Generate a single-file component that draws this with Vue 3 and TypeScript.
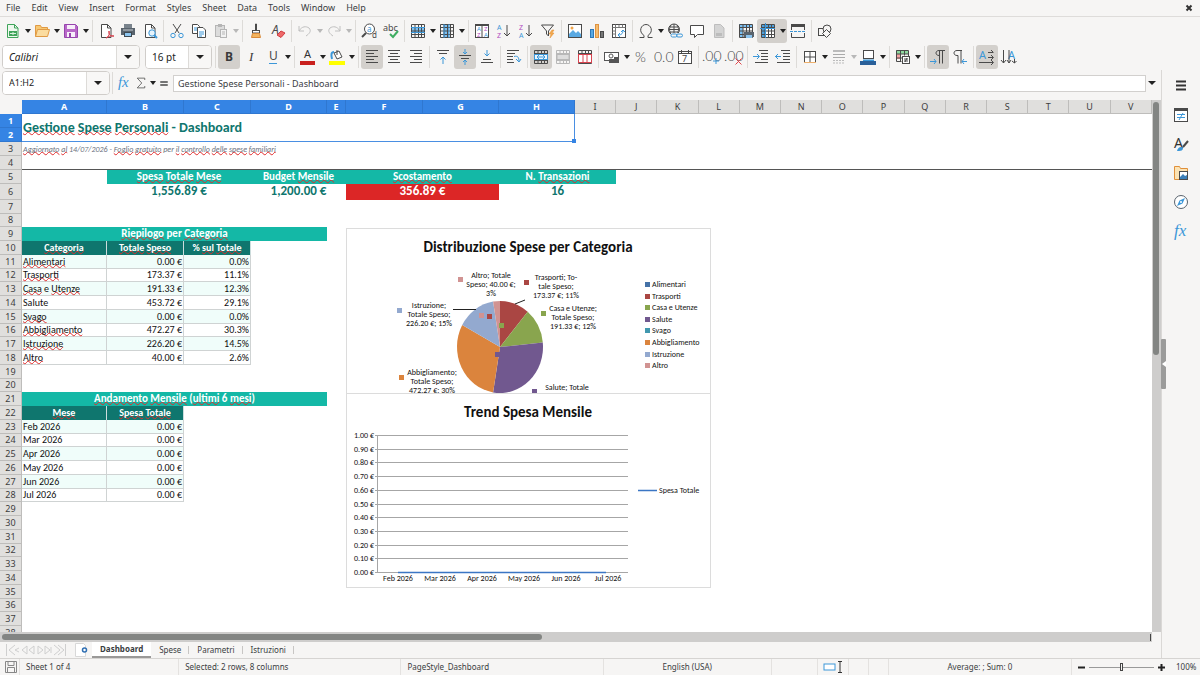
<script setup lang="ts">
import { ref } from 'vue'

interface Tool {
  icon?: string
  label?: string
  menu?: boolean
  active?: boolean
  disabled?: boolean
  sep?: boolean
}
interface Cell {
  text: string
  span?: number
  rows?: number
  cls?: string
}

const K = '#4a4a4a'
const B = '#3c97d8'
const box = (x: number, y: number, w: number, h: number, fill = 'none', stroke = K) =>
  `<rect x="${x}" y="${y}" width="${w}" height="${h}" fill="${fill}" stroke="${stroke}"/>`
const line = (d: string, stroke = K, w = 1) =>
  `<path d="${d}" fill="none" stroke="${stroke}" stroke-width="${w}"/>`
const solid = (d: string, fill: string) => `<path d="${d}" fill="${fill}"/>`
const glyph = (t: string, x: number, y: number, size: number, fill = K, extra = '') =>
  `<text x="${x}" y="${y}" font-size="${size}" fill="${fill}" ${extra}>${t}</text>`
const LIGHT = 'font-family="Lato, sans-serif" font-weight="300"'
const gridLines = (c = K) => line('M1.5 1.5h13v13h-13zM1.5 4.5h13M1.5 8h13M1.5 11.5h13M5 1.5v13M8.5 1.5v13M11.5 1.5v13', c)

const icons: Record<string, string> = {
  new: '<path d="M2.5 1.5h7l3.500 3.500v9.500h-10.500z" fill="#eef8ee" stroke="#3fa45a"/>' + line('M9.500 1.500v3.500h3.500', '#3fa45a') + solid('M4 8h8v5H4z', '#3fa45a') + line('M5 10.500h6M8 9v3', '#d7f0dc'),
  open: '<path d="M1.500 13.500v-11h5l1 2h6v3" fill="#f7c873" stroke="#e09a44"/><path d="M1.500 13.500l2-7h12l-2 7z" fill="#fbdc9f" stroke="#e09a44"/>',
  save: '<path d="M1.500 1.500h11l2 2v11h-13z" fill="#b868c8" stroke="#9744ad"/>' + solid('M4 2h8v4H4zM4 9h8v5H4z', '#f7eefa') + solid('M6 10h2v4H6z', '#9744ad'),
  pdf: '<path d="M3.500 1.500h6l3.500 3.500v9.500h-9.500z" fill="#fff" stroke="#4a4a4a"/>' + line('M9.500 1.500v3.500h3.500') + line('M8 15c3-1 4-5 3-7c-1 3 2 6 5 5c-3-1-6 1-8 2z', '#d8424e'),
  print: solid('M1 5h14v7H1z', '#59636d') + solid('M4 1h8v4H4z', '#79838c') + box(4.5, 9.5, 7, 4, '#8cc4ee', '#3d4850') + line('M3 7h10', '#c6ccd0'),
  preview: '<path d="M3.500 1.500h6l3.500 3.500v9.500h-9.500z" fill="#fff" stroke="#4a4a4a"/>' + line('M9.500 1.500v3.500h3.500') + '<circle cx="10" cy="10" r="3.200" fill="#e6f3fc" stroke="#3c97d8"/>' + line('M12 12l3 3', B, 2),
  cut: line('M4 1l6 9M12 1l-6 9', K, 1) + '<circle cx="4" cy="12.500" r="2.200" fill="none" stroke="#3c97d8"/><circle cx="12" cy="12.500" r="2.200" fill="none" stroke="#3c97d8"/>',
  copy: '<path d="M1.500 1.500h5l2 2v7h-7z" fill="#fff" stroke="#4a4a4a"/><path d="M6.500 4.500h5.500l2.500 2.500v7.500h-8z" fill="#fff" stroke="#4a4a4a"/>' + line('M3 5h3M3 7h3M8 9h5M8 11h5M8 13h3', B),
  paste: box(2.5, 2.5, 9, 11, '#dcdcdc', '#b5b5b5') + solid('M5 1h4v3H5z', '#b5b5b5') + box(7.5, 6.5, 6, 8, '#f2f2f2', '#b5b5b5') + line('M9 9h3M9 11h3', '#b5b5b5'),
  clone: line('M7.500 1v6h1V1z') + box(4.5, 7.5, 7, 2.5, '#fff') + '<path d="M4.500 10.500l-1 4h9l-1-4z" fill="#f3b45f" stroke="#d8893a"/>',
  clear: glyph('A', 2, 11, 12, K, 'font-style="italic"') + '<path d="M7 12l4-4 4 2-4 4.500z" fill="#ee6a6a" stroke="#d13b40"/>',
  undo: line('M2 3v5h5M2 8c3-5 7-5 10-3c3 3 0 6-3 8', '#c0c0c0'),
  redo: line('M14 3v5h-5M14 8c-3-5-7-5-10-3c-3 3 0 6 3 8', '#c0c0c0'),
  find: '<circle cx="8.500" cy="6" r="5" fill="#fff" stroke="#4a4a4a"/>' + line('M5 10l-4 4', K, 2) + glyph('a', 6, 9, 8, B) + glyph('d', 11, 15, 8),
  spell: glyph('abc', 0, 8, 9) + line('M7 11l3 3 5-6', '#3fae62', 2),
  row: solid('M1 5h14v5H1z', '#7cc0f2') + gridLines() + line('M1 4.500h14M1 9.500h14', B),
  col: solid('M5 1h5v14H5z', '#7cc0f2') + gridLines() + line('M5 1v14M10 1v14', B),
  sort: box(1.5, 1.5, 13, 13, '#fff') + solid('M1 1h14v2H1z', K) + line('M8 3v12') + glyph('A', 3, 8, 6, B) + glyph('Z', 3, 14, 6, '#b04bc0') + glyph('Z', 10, 8, 6, '#b04bc0') + glyph('A', 10, 14, 6, B),
  asc: glyph('A', 1, 7, 7, B) + glyph('Z', 1, 15, 7, '#b04bc0') + line('M11 2v11M8 10l3 3 3-3'),
  desc: glyph('Z', 1, 7, 7, '#b04bc0') + glyph('A', 1, 15, 7, B) + line('M11 2v11M8 10l3 3 3-3'),
  filter: line('M1.500 2h12l-5 6v5l-2-2v-3z') + '<path d="M12 7l-3 4h2l-1 4 4-5h-2l2-3z" fill="#f3a94e" stroke="#e28e33" stroke-width=".5"/>',
  image: box(1.5, 1.5, 13, 13, '#fff') + solid('M2 14v-3l4-4 3 3 2-2 3 3v3z', '#5aa9e2') + '<circle cx="5" cy="5" r="1.500" fill="#f0a44a"/>',
  chart: box(1.5, 6.5, 3, 8, '#5aa9e2', '#2f79b8') + box(6.5, 1.5, 3, 13, '#f6bd70', '#df9341') + box(11.5, 8.5, 3, 6, '#777', K),
  pivot: box(1.5, 1.5, 13, 13, '#fff') + line('M1.500 4.500h13M4.500 1.500v13M8 1.500v3M11.500 1.500v3M1.500 8h3M1.500 11h3', '#777') + line('M7 12c4 0 5-2 5-5M10 9l2-2 2 2M9 10l-2 2 2 2', B),
  omega: line('M1.500 14.500h4.500v-2c-6-4-3-11 2-11s8 7 2 11v2h4.500'),
  link: '<circle cx="7" cy="6.500" r="5.500" fill="none" stroke="#4a4a4a"/>' + line('M1.500 6.500h11M7 1v11M4 2c-2 3-2 6 0 9M10 2c2 3 2 6 0 9M3 4h8M3 9h8') + '<path d="M4 10h12v5H4z" fill="#f6f5f4"/><rect x="4" y="11" width="6" height="3" rx="1.500" fill="none" stroke="#3c97d8"/><rect x="9.500" y="11" width="6" height="3" rx="1.500" fill="none" stroke="#3c97d8"/>',
  comment: '<path d="M1.500 2.500h13v9h-6l-3 3v-3h-4z" fill="#fff" stroke="#4a4a4a"/>',
  header: '<path d="M3.500 1.500h6l3.500 3.500v9.500h-9.500z" fill="#d4d4d4" stroke="#bdbdbd"/>' + solid('M5 10h6v3H5z', '#bcbcbc'),
  printarea: solid('M1 1h13v3H1zM1 1h4v13H1z', '#7cc0f2') + gridLines() + solid('M6 9h10v5H6z', '#59636d') + solid('M8 12h6v3H8z', '#8cc4ee'),
  freeze: solid('M6 6h9v9H6z', '#fff') + solid('M2 2h12v3H2zM2 2h4v12H2z', '#4da0dd') + gridLines() + line('M5.500 0v15M0 5.500h15', B),
  split: line('M1.500 7V2h13v5M1.500 10v4.500h13V10') + solid('M1 1h14v3H1z', K) + '<path d="M0 8.500h16" stroke="#3c97d8" stroke-dasharray="3 1"/>',
  shapes: box(1.5, 5.5, 7, 7, '#f6f5f4') + '<circle cx="10" cy="6" r="4" fill="#f6f5f4" stroke="#4a4a4a"/><path d="M9.500 6.500l4 4-4 4-4-4z" fill="#f6f5f4" stroke="#4a4a4a"/>',
  bold: glyph('B', 4, 12, 12, '#3a3a3a', 'font-weight="700"'),
  italic: glyph('I', 6, 12, 13, '#3a3a3a', 'font-style="italic" font-family="Liberation Serif, serif"'),
  underline: glyph('U', 4, 11, 12) + line('M4 14.500h8', B),
  fontcolor: glyph('A', 4, 9, 11, '#333') + solid('M0 12h15v4H0z', '#c9211e'),
  fill: '<path d="M5 4l5-2 3 6-5 2z" fill="#fff" stroke="#4a4a4a"/>' + line('M8 6V1') + line('M5 3c-3 0-3 3-2 7', B, 2) + solid('M0 12h16v4H0z', '#ffff00'),
  left: line('M2 1.500h12M2 4.500h8M2 7.500h12M2 10.500h8M2 13.500h12'),
  center: line('M2 1.500h12M4 4.500h8M2 7.500h12M4 10.500h8M2 13.500h12'),
  right: line('M2 1.500h12M6 4.500h8M2 7.500h12M6 10.500h8M2 13.500h12'),
  top: line('M2 1.500h12M4 4.500h8') + line('M8 15V8M5.500 10.500L8 8l2.500 2.500', B),
  middle: line('M2 6.500h12M4 9.500h8') + line('M8 0v5M6 3l2 2 2-2M8 16v-5M6 13l2-2 2 2', B),
  bottom: line('M4 10.500h8M2 13.500h12') + line('M8 1v6M5.500 4.500L8 7l2.500-2.500', B),
  wrap: line('M1 1.500h12M1 4.500h8M1 7.500h6M1 10.500h6M1 13.500h7') + line('M8 7.500c4-1 5 1 5 5M10 10l3 3 2-3', B),
  merge: gridLines() + box(1.5, 5.5, 13, 5, '#eaf5fd', B) + line('M4 8h8M6 6L4 8l2 2M10 6l2 2-2 2', B),
  mergeoff: gridLines('#b8b8b8') + box(2, 5.5, 12, 5, '#ddd', '#b8b8b8'),
  unmerge: gridLines() + box(1.5, 5.5, 13, 8, '#fff', '#d8424e') + line('M6 5v9M10 5v9', '#d8424e'),
  money: box(0.5, 3.5, 14, 8, '#fff', '#555') + '<circle cx="7" cy="7" r="2" fill="none" stroke="#555"/>' + solid('M5 10h5v4H5zM10 8h5v6h-5z', '#555'),
  percent: glyph('%', 2, 13, 14, K, LIGHT),
  number: glyph('0.0', -1, 13, 14, K, LIGHT),
  date: box(1.5, 2.5, 13, 12, '#fff') + line('M1.500 4.500h13M4.500 1v3M11.500 1v3') + glyph('7', 5, 13, 9),
  adddec: glyph('.00', -2, 12, 14, K, LIGHT) + line('M12 9v6M9 12h6', B),
  deldec: glyph('.00', -2, 12, 14, K, LIGHT) + line('M9.500 9.500l6 6M15.500 9.500l-6 6', '#e2464c'),
  indent: line('M6 1.500h9M8 4.500h7M8 7.500h7M8 10.500h7M2 13.500h13') + line('M0 7.500h6M4 5l2.500 2.500L4 10', B),
  outdent: line('M6 1.500h9M8 4.500h7M8 7.500h7M8 10.500h7M2 13.500h13') + line('M0 7.500h6M3 5L.5 7.500 3 10', B),
  borders: box(2.5, 2.5, 11, 11, '#fff') + line('M8 2v12M2 8h12') + line('M2 13.500h12', '#eeb06c'),
  linestyle: solid('M2 1h12v2H2z', '#bbb') + line('M2 5.500h12M2 8.500h12', '#aaa') + '<path d="M2 11.500h12M2 14h12" stroke="#bbb" stroke-dasharray="2 1"/>',
  linecolor: box(3.5, 1.5, 10, 8, '#fff') + line('M3 11.500h11', B, 2) + solid('M0 12h16v4H0z', '#2a6099'),
  cond: solid('M1 1h12v4H1z', '#8fd9a0') + solid('M1 5h4v5H1z', '#f5a3a3') + line('M1.500 1.500h12v6M1.500 1.500v11h5M1.500 5h12M1.500 9h6M5.500 1.500v11M9.500 1.500v5') + box(7.5, 7.5, 7, 7, '#fff') + line('M9 10h4M9 12h4M12 9l-2 4'),
  ltr: line('M15 1.500H9c-4 0-4 5 0 5M9.500 1.500v13M12.500 1.500v13') + line('M0 12.500h6M4 10l2 2.500L4 15', B),
  rtl: line('M10 1.500H5c-4 0-4 5 0 5h1v8M9 1.500v13') + line('M15 12.500h-5M12 10l-2 2.500 2 2.500', B),
  texth: glyph('A', 0, 10, 11, B) + line('M9 3.500h5M12 1l2.500 2.500M9 8.500h5M12 6l2.500 2.500L12 11M0 13.500h14M12 11l2.500 2.500L12 16'),
  textv: glyph('A', 7, 10, 11, B) + line('M2.500 1v13M0 11l2.500 3L5 11M8 1v13M6 11l2 3 2-3M13.500 10v4M11 12l2.500 2 2-2'),
  menu: line('M3 3.500h10M3 7.500h10M3 11.500h10', '#333', 2),
  props: box(1.5, 1.5, 13, 13, '#fff') + solid('M1 1h14v3H1z', K) + line('M4 7.500h8M4 10.500h8M10 6L6 13', B),
  styles: glyph('A', 1, 12, 14, '#333') + line('M15 5l-5 6', K, 2) + solid('M4 15c1-4 4-5 6-3c0 3-3 3-6 3z', B),
  gallery: '<path d="M1.500 14.500v-13h5l1 2h7v11z" fill="#fbe3b5" stroke="#e0903a"/>' + box(6.5, 6.5, 8, 8, '#fff') + solid('M7 14v-2l3-3 2 2 2-1v4z', '#3c7fb8') ,
  nav: '<circle cx="8" cy="8" r="6.500" fill="#fff" stroke="#59636d"/><path d="M12 4l-2.500 5.500L4 12l2.500-5.500z" fill="#3c97d8"/><circle cx="8" cy="8" r="1" fill="#fff"/>',
  fx: glyph('fx', 1, 13, 17, B, 'font-style="italic" font-family="Liberation Serif, serif"'),
  sigma: line('M13 4V1.500H3l6 6.500-6 6.500h10V12'),
  equals: line('M3 6.500h10M3 10.500h10', K, 2),
}

const s: Tool = { sep: true }
const t = (icon: string, label: string, o: Partial<Tool> = {}): Tool => ({ icon, label, ...o })
const m = { menu: true }

const standard: Tool[] = [
  t('new', 'New', m), t('open', 'Open', m), t('save', 'Save', m), s,
  t('pdf', 'Export as PDF'), t('print', 'Print'), t('preview', 'Print Preview'), s,
  t('cut', 'Cut'), t('copy', 'Copy'), t('paste', 'Paste', { menu: true, disabled: true }), s,
  t('clone', 'Clone Formatting'), t('clear', 'Clear Formatting'), s,
  t('undo', 'Undo', { menu: true, disabled: true }), t('redo', 'Redo', { menu: true, disabled: true }), s,
  t('find', 'Find & Replace'), t('spell', 'Spelling'), s,
  t('row', 'Row', m), t('col', 'Column', m), s,
  t('sort', 'Sort'), t('asc', 'Sort Ascending'), t('desc', 'Sort Descending'), t('filter', 'AutoFilter'), s,
  t('image', 'Insert Image'), t('chart', 'Insert Chart'), t('pivot', 'Pivot Table'), s,
  t('omega', 'Special Character', m), t('link', 'Hyperlink'), t('comment', 'Comment'), t('header', 'Headers and Footers', { disabled: true }), s,
  t('printarea', 'Print Area'), t('freeze', 'Freeze Rows and Columns', { menu: true, active: true }), t('split', 'Split Window'), s,
  t('shapes', 'Draw Functions'),
]
const formatting: Tool[] = [
  s, t('bold', 'Bold', { active: true }), t('italic', 'Italic'), t('underline', 'Underline', m), s,
  t('fontcolor', 'Font Color', m), t('fill', 'Background Color', m), s,
  t('left', 'Align Left', { active: true }), t('center', 'Center'), t('right', 'Align Right'), s,
  t('top', 'Align Top'), t('middle', 'Center Vertically', { active: true }), t('bottom', 'Align Bottom'), s,
  t('wrap', 'Wrap Text'), s,
  t('merge', 'Merge and Center', { active: true }), t('mergeoff', 'Merge Cells', { disabled: true }), t('unmerge', 'Unmerge Cells'), s,
  t('money', 'Currency', m), t('percent', 'Percent'), t('number', 'Number'), t('date', 'Date'), s,
  t('adddec', 'Add Decimal Place'), t('deldec', 'Delete Decimal Place'), s,
  t('indent', 'Increase Indent'), t('outdent', 'Decrease Indent'), s,
  t('borders', 'Borders', m), t('linestyle', 'Border Style', { menu: true, disabled: true }), t('linecolor', 'Border Color', m), s,
  t('cond', 'Conditional', m), s,
  t('ltr', 'Left-To-Right', { active: true }), t('rtl', 'Right-To-Left'), s,
  t('texth', 'Text Direction Horizontal', { active: true }), t('textv', 'Text Direction Vertical'),
]
const sidebar = [['menu', 'Sidebar Settings'], ['props', 'Properties'], ['styles', 'Styles'], ['gallery', 'Gallery'], ['nav', 'Navigator'], ['fx', 'Functions']]
const menus = ['File', 'Edit', 'View', 'Insert', 'Format', 'Styles', 'Sheet', 'Data', 'Tools', 'Window', 'Help']
const tabs = ['Dashboard', 'Spese', 'Parametri', 'Istruzioni']

const columns = 'ABCDEFGHIJKLMNOPQRSTUV'.split('')

// Words between tildes carry the spelling mark.
const parts = (text: string) => text.split('~').map((v, i) => ({ v, bad: i % 2 === 1 }))

const categories: [string, string, string][] = [
  ['~Alimentari~', '0.00 €', '0.0%'],
  ['~Trasporti~', '173.37 €', '11.1%'],
  ['~Casa~ e ~Utenze~', '191.33 €', '12.3%'],
  ['Salute', '453.72 €', '29.1%'],
  ['~Svago~', '0.00 €', '0.0%'],
  ['~Abbigliamento~', '472.27 €', '30.3%'],
  ['~Istruzione~', '226.20 €', '14.5%'],
  ['~Altro~', '40.00 €', '2.6%'],
]
const months = ['Feb 2026', 'Mar 2026', 'Apr 2026', 'May 2026', 'Jun 2026', 'Jul 2026']

const cells: Record<number, Cell[]> = {
  1: [{ text: '~Gestione~ ~Spese~ ~Personali~ - Dashboard', span: 8, rows: 2, cls: 'title' }],
  3: [{ text: '~Aggiornato~ ~al~ 14/07/2026 - ~Foglio~ ~gratuito~ per ~il~ ~controllo~ ~delle~ ~spese~ ~familiari~', span: 8, cls: 'note' }],
  5: [
    { text: '' },
    { text: '~Spesa~ ~Totale~ ~Mese~', span: 2, cls: 'band' },
    { text: 'Budget ~Mensile~', span: 2, cls: 'band' },
    { text: '~Scostamento~', span: 2, cls: 'band' },
    { text: 'N. ~Transazioni~', span: 2, cls: 'band' },
  ],
  6: [
    { text: '' },
    { text: '1,556.89 €', span: 2, cls: 'kpi' },
    { text: '1,200.00 €', span: 2, cls: 'kpi' },
    { text: '356.89 €', span: 2, cls: 'kpi alert' },
    { text: '16', span: 2, cls: 'kpi' },
  ],
  9: [{ text: '~Riepilogo~ per ~Categoria~', span: 4, cls: 'band' }],
  10: [{ text: '~Categoria~', cls: 'head' }, { text: '~Totale~ ~Speso~', cls: 'head' }, { text: '% ~sul~ ~Totale~', cls: 'head' }],
  21: [{ text: '~Andamento~ ~Mensile~ (~ultimi~ 6 ~mesi~)', span: 4, cls: 'band' }],
  22: [{ text: '~Mese~', cls: 'head' }, { text: '~Spesa~ ~Totale~', cls: 'head' }],
}
categories.forEach((c, i) => {
  const tint = i % 2 ? '' : ' tint'
  cells[11 + i] = c.map((text, j) => ({ text, cls: (j ? 'data num' : 'data') + tint }))
})
months.forEach((mo, i) => {
  const tint = i % 2 ? '' : ' tint'
  cells[23 + i] = [{ text: mo, cls: 'data' + tint }, { text: '0.00 €', cls: 'data num' + tint }]
})
const rows = Array.from({ length: 38 }, (_, i) => {
  const n = i + 1
  const list = cells[n] ?? []
  const used = n === 2 ? 8 : list.reduce((a, c) => a + (c.span ?? 1), 0)
  return { n, list, rest: columns.length - used }
})

const palette = ['#4572a7', '#aa4643', '#89a54e', '#71588f', '#4198af', '#db843d', '#93a9cf', '#d19392']
const legend = categories.map((c, i) => ({ name: c[0].replace(/~/g, ''), color: palette[i], y: Math.round(56 + i * 11.6) }))
const CX = 154, CY = 119, RX = 43, RY = 46
const values = categories.map(c => parseFloat(c[1]))
const total = values.reduce((a, b) => a + b, 0)
let acc = 0
const slices = values.map((v, i) => {
  const a0 = (acc / total) * 2 * Math.PI
  acc += v
  const a1 = (acc / total) * 2 * Math.PI
  const p = (a: number) => `${(CX + RX * Math.sin(a)).toFixed(2)} ${(CY - RY * Math.cos(a)).toFixed(2)}`
  return { d: `M${CX} ${CY}L${p(a0)}A${RX} ${RY} 0 0 1 ${p(a1)}Z`, color: palette[i], v }
}).filter(x => x.v > 0)
const labels = [
  { x: 145, y: 50, mx: 112, my: 49, c: 7, lines: ['Altro; Totale', 'Speso; 40.00 €;', '3%'] },
  { x: 210, y: 52, mx: 178, my: 52, c: 1, lines: ['Trasporti; To-', 'tale Speso;', '173.37 €; 11%'] },
  { x: 227, y: 83, mx: 195, my: 83, c: 2, lines: ['Casa e Utenze;', 'Totale Speso;', '191.33 €; 12%'] },
  { x: 83, y: 80, mx: 51, my: 80, c: 6, lines: ['Istruzione;', 'Totale Speso;', '226.20 €; 15%'] },
  { x: 86, y: 147, mx: 53, my: 147, c: 5, lines: ['Abbigliamento;', 'Totale Speso;', '472.27 €; 30%'] },
  { x: 221, y: 162, mx: 186, my: 161, c: 3, lines: ['Salute; Totale', 'Speso; 453.72 €;'] },
]
const dots = [[133, 85, 7], [141, 86, 1], [153, 95, 2], [149, 124, 3]]
const ticks = Array.from({ length: 11 }, (_, i) => ({ label: (1 - i / 10).toFixed(2) + ' €', y: Math.round(42 + i * 13.7) }))

const fontName = ref('Calibri')
const fontSize = ref('16 pt')
const cellRef = ref('A1:H2')
const formula = ref('Gestione Spese Personali - Dashboard')
const zoom = ref(50)
const activeTab = ref('Dashboard')
</script>

<template>
  <div class="app">
    <nav class="menubar" aria-label="Menu">
      <button v-for="x in menus" :key="x" type="button">{{ x }}</button>
      <button type="button" class="close" aria-label="Close document">
        <svg width="8" height="8" viewBox="0 0 8 8"><path d="M1.500 1.500l5 5M6.500 1.500l-5 5" stroke="#333" stroke-width="2" /></svg>
      </button>
    </nav>

    <div class="toolbar first" role="toolbar" aria-label="Standard">
      <template v-for="(x, i) in standard" :key="i">
        <span v-if="x.sep" class="sep"></span>
        <span v-else class="tool" :class="{ on: x.active, split: x.menu, off: x.disabled }">
          <button type="button" class="btn" :aria-label="x.label" :disabled="x.disabled">
            <svg width="16" height="16" viewBox="0 0 16 16" v-html="icons[x.icon!]"></svg>
          </button>
          <button v-if="x.menu" type="button" class="caret" :aria-label="x.label + ' options'"></button>
        </span>
      </template>
    </div>

    <div class="toolbar second" role="toolbar" aria-label="Formatting">
      <span class="combo font">
        <input v-model="fontName" aria-label="Font name" />
        <button type="button" aria-label="Show fonts"></button>
      </span>
      <span class="combo size">
        <input v-model="fontSize" aria-label="Font size" />
        <button type="button" aria-label="Show sizes"></button>
      </span>
      <template v-for="(x, i) in formatting" :key="i">
        <span v-if="x.sep" class="sep"></span>
        <span v-else class="tool" :class="{ on: x.active, split: x.menu, off: x.disabled }">
          <button type="button" class="btn" :aria-label="x.label" :disabled="x.disabled">
            <svg width="16" height="16" viewBox="0 0 16 16" v-html="icons[x.icon!]"></svg>
          </button>
          <button v-if="x.menu" type="button" class="caret" :aria-label="x.label + ' options'"></button>
        </span>
      </template>
    </div>

    <div class="work">
      <div class="main">
        <div class="formulabar">
          <span class="combo name">
            <input v-model="cellRef" aria-label="Name box" />
            <button type="button" aria-label="Show names"></button>
          </span>
          <span class="sep"></span>
          <button type="button" class="small" aria-label="Function Wizard"><svg width="14" height="16" viewBox="0 0 16 16" v-html="icons.fx"></svg></button>
          <button type="button" class="small" aria-label="Select Function"><svg width="12" height="12" viewBox="0 0 16 16" v-html="icons.sigma"></svg></button>
          <button type="button" class="caret" aria-label="Function options"></button>
          <button type="button" class="small" aria-label="Formula"><svg width="12" height="14" viewBox="0 0 16 16" v-html="icons.equals"></svg></button>
          <input v-model="formula" class="formula" aria-label="Formula input line" />
          <button type="button" class="caret wide" aria-label="Expand formula bar"></button>
        </div>

        <div class="sheetrow">
          <div class="sheet">
            <table>
              <colgroup>
                <col class="c-row" />
                <col v-for="c in columns" :key="c" :class="'c-' + c" />
              </colgroup>
              <thead>
                <tr>
                  <td class="corner"></td>
                  <th v-for="(c, i) in columns" :key="c" scope="col" :class="{ sel: i < 8 }">{{ c }}</th>
                </tr>
              </thead>
              <tbody>
                <tr v-for="r in rows" :key="r.n" :class="{ short: r.n % 4 === 0 && r.n > 4, tall: r.n === 6, frozen: r.n === 4 }">
                  <th scope="row" :class="{ sel: r.n < 3 }">{{ r.n }}</th>
                  <td v-for="(c, i) in r.list" :key="i" :colspan="c.span ?? 1" :rowspan="c.rows ?? 1" :class="c.cls">
                    <template v-for="(p, j) in parts(c.text)" :key="j"><span v-if="p.bad" class="bad">{{ p.v }}</span><template v-else>{{ p.v }}</template></template>
                    <i v-if="c.cls === 'title'" class="handle"></i>
                  </td>
                  <td v-if="r.rest" :colspan="r.rest"></td>
                </tr>
              </tbody>
            </table>

            <svg class="chart pie" width="365" height="166" viewBox="0 0 365 166" role="img" aria-label="Distribuzione Spese per Categoria">
              <rect x="0.5" y="0.5" width="364" height="175" fill="#fff" stroke="#dcdcdc" />
              <text class="ctitle" x="182" y="24">Distribuzione Spese per Categoria</text>
              <path v-for="(p, i) in slices" :key="i" :d="p.d" :fill="p.color" />
              <path d="M107 81.500h23M169 76l10-4" stroke="#222" fill="none" />
              <rect v-for="(d, i) in dots" :key="'d' + i" :x="d[0]" :y="d[1]" width="5" height="5" :fill="palette[d[2]]" />
              <g v-for="(l, i) in labels" :key="'l' + i">
                <rect :x="l.mx" :y="l.my" width="5" height="5" :fill="palette[l.c]" />
                <text v-for="(w, j) in l.lines" :key="j" class="mid" :x="l.x" :y="l.y + j * 9">{{ w }}</text>
              </g>
              <g v-for="l in legend" :key="l.name">
                <rect x="299" :y="l.y - 2" width="5" height="5" :fill="l.color" />
                <text x="306" :y="l.y + 3">{{ l.name }}</text>
              </g>
            </svg>

            <svg class="chart trend" width="365" height="195" viewBox="0 0 365 195" role="img" aria-label="Trend Spesa Mensile">
              <rect x="0.5" y="0.5" width="364" height="194" fill="#fff" stroke="#dcdcdc" />
              <text class="ctitle" x="182" y="24">Trend Spesa Mensile</text>
              <g v-for="k in ticks" :key="k.label">
                <path :d="`M29 ${k.y}.5H282`" stroke="#a6a6a6" />
                <text class="end" x="28" :y="k.y + 3">{{ k.label }}</text>
              </g>
              <path d="M31.500 42v138" stroke="#a6a6a6" />
              <path d="M52 179.500h208M292 97.500h19" stroke="#3b76c4" stroke-width="1.500" fill="none" />
              <text v-for="(mo, i) in months" :key="mo" class="mid" :x="52 + i * 42" y="188">{{ mo }}</text>
              <text x="313" y="100">Spesa Totale</text>
            </svg>
          </div>
          <div class="vscroll"><div class="vthumb"></div></div>
        </div>
        <div class="hscroll"><div class="hthumb"></div><div class="grip"></div></div>

        <div class="tabs">
          <button type="button" class="tabnav" aria-label="Scroll sheets" disabled>
            <svg width="62" height="12" viewBox="0 0 62 12"><path d="M1.500 0v12M10 1L4 6l6 5M14 4l-4 2 4 2M22 2l-5 4 5 4zM29 2l-5 4 5 4zM33 2l5 4-5 4zM40 2l5 4-5 4zM46 3v6M49 1l6 5-6 5M53 1l6 5-6 5M60.500 0v12" fill="none" stroke="#cfcfcf" /></svg>
          </button>
          <button type="button" class="addsheet" aria-label="Add sheet">
            <svg width="14" height="14" viewBox="0 0 14 14"><path d="M.5 .5h8l2 2v11h-10z" fill="#fff" stroke="#d8d8d8" /><circle cx="9.500" cy="7" r="2" fill="#fff" stroke="#2f6fb3" stroke-width="1.500" /></svg>
          </button>
          <button v-for="x in tabs" :key="x" type="button" class="tab" :class="{ current: activeTab === x }" @click="activeTab = x">{{ x }}</button>
        </div>
      </div>

      <aside class="sidebar">
        <button v-for="x in sidebar" :key="x[0]" type="button" :aria-label="x[1]"><svg width="16" height="16" viewBox="0 0 16 16" v-html="icons[x[0]]"></svg></button>
        <button type="button" class="splitter" aria-label="Hide sidebar"><svg width="4" height="6" viewBox="0 0 4 6"><path d="M4 0v6L0 3z" fill="#fff" /></svg></button>
      </aside>
    </div>

    <footer class="status">
      <span class="pad"><svg width="12" height="12" viewBox="0 0 12 12"><path d="M.5 .5h11v11H.500zM3 .5v4h6v-4M2.500 11.500v-5h7v5" fill="none" stroke="#888" /></svg></span>
      <span>Sheet 1 of 4</span>
      <span>Selected: 2 rows, 8 columns</span>
      <span>PageStyle_Dashboard</span>
      <span class="ctr">English (USA)</span>
      <span></span>
      <span class="pad ctr"><svg width="20" height="14" viewBox="0 0 20 14"><rect x="1" y="4" width="11" height="6" fill="#fff" stroke="#3c97d8" /><path d="M15 1.500h4M15 12.500h4M17 1.500v11" fill="none" stroke="#333" /></svg></span>
      <span></span>
      <span></span>
      <span class="ctr">Average: ; Sum: 0</span>
      <span class="zoom">
        <button type="button" aria-label="Zoom out"><svg width="7" height="7" viewBox="0 0 7 7"><path d="M0 3.500h7" stroke="#222" stroke-width="2" /></svg></button>
        <input v-model="zoom" type="range" aria-label="Zoom" />
        <button type="button" aria-label="Zoom in"><svg width="7" height="7" viewBox="0 0 7 7"><path d="M0 3.500h7M3.500 0v7" stroke="#222" stroke-width="2" /></svg></button>
        <output>100%</output>
      </span>
    </footer>
  </div>
</template>

<style>
html, body, #app { height: 100%; }
body { overflow: hidden; }
</style>

<style scoped>
.app {
  display: flex; flex-direction: column; height: 100%; min-height: 0;
  background: #f6f5f4; color: #3a3d3f;
  font-family: "Noto Sans", sans-serif; font-size: 9px; line-height: 12px;
}
button, input, output { font: inherit; color: inherit; }
button { border: 0; padding: 0; margin: 0; background: none; display: flex; align-items: center; justify-content: center; }
input { border: 0; padding: 0; margin: 0; min-width: 0; background: #fff; outline: none; }
svg { display: block; overflow: visible; flex: none; }
.app svg { font-family: "Noto Sans", sans-serif; }

.menubar { display: flex; gap: 1px; height: 16px; padding-left: 1px; border-bottom: 1px solid #dedcda; }
.menubar button { padding: 0 5px; }
.menubar .close { margin-left: auto; padding: 0 7px; }

.toolbar { display: flex; align-items: center; padding-left: 2px; }
.first { height: 27px; }
.second { height: 26px; }
.sep { width: 1px; height: 22px; margin: 0 2px; background: #dddbd8; flex: none; }
.split + .sep { margin-left: 3px; }
.tool { display: flex; height: 24px; border-radius: 3px; }
.tool.on { background: #d3d0cc; }
.on.split { padding-right: 1px; }
.btn { width: 22px; height: 24px; }
.caret { width: 7px; position: relative; }
.caret::after, .combo button::after {
  content: ""; border: 3px solid transparent; border-top: 4px solid #222; border-bottom: 0;
}
.off .caret::after { border-top-color: #b8b8b8; }
.combo { display: flex; height: 22px; border: 1px solid #d0cdca; border-radius: 4px; background: #fff; overflow: hidden; flex: none; }
.combo input { flex: 1; padding-left: 6px; color: #222; }
.combo button { width: 23px; border-left: 1px solid #dddbd8; background: #f8f7f6; }
.combo button::after { border-width: 4px 4px 0; }
.combo.font { width: 136px; margin-right: 5px; }
.combo.size { width: 65px; margin-right: 1px; }
.font input { font-style: italic; font-size: 10px; }
.size input { font-size: 10px; }
.combo.name { width: 106px; }

.work { flex: 1; min-height: 0; display: flex; }
.main { flex: 1; min-width: 0; display: flex; flex-direction: column; }
.formulabar { display: flex; align-items: center; height: 26px; padding: 0 3px 4px 2px; }
.formulabar .small { padding: 0 2px; }
.formula { flex: 1; height: 17px; box-sizing: border-box; border: 1px solid #d2d0ce; padding-left: 4px; margin-left: 1px; }
.caret.wide { width: 12px; }
.caret.wide::after { border-width: 4px 4px 0; }

.sheetrow { flex: 1; min-height: 0; display: flex; }
.sheet { flex: 1; min-width: 0; position: relative; overflow: hidden; background: #fff; }
table { width: 100%; table-layout: fixed; border-spacing: 0; border-collapse: separate; font-family: Carlito, Lato, sans-serif; font-size: 10px; color: #111; }
.c-row { width: 22px; }
.c-A { width: 85px; }
.c-B, .c-F { width: 77px; }
.c-C { width: 67px; }
.c-D, .c-G, .c-H { width: 76px; }
.c-E { width: 19px; }
tr { height: 14px; }
tr.short { height: 13px; }
tr.tall { height: 16px; }
th, td { padding: 0; line-height: 12px; white-space: nowrap; box-sizing: border-box; }
th { font-family: "Noto Sans", sans-serif; font-size: 9px; font-weight: 400; color: #3d3d3d; background: #e0dfdd; border-right: 1px solid #bebdbb; border-bottom: 1px solid #bebdbb; text-align: center; }
th.sel { background: #3584e4; color: #fff; font-weight: 700; border-color: #2f77d0; }
.corner { background: #f6f5f4; }
.frozen td { border-bottom: 1px solid #555; }
.title { position: relative; font-size: 14px; font-weight: 700; color: #0f766e; padding-left: 1px; border-right: 1px solid #4a8fe2; border-bottom: 1px solid #4a8fe2; }
.handle { position: absolute; right: -2px; bottom: -2px; width: 4px; height: 4px; background: #3584e4; }
.note { font-size: 8px; font-style: italic; color: #6b7280; padding-left: 1px; }
.band { background: #14b8a6; color: #fff; font-weight: 700; font-size: 11px; text-align: center; }
.kpi { color: #0f766e; font-weight: 700; font-size: 13px; text-align: center; line-height: 14px; padding-bottom: 2px; }
.alert { background: #dc2626; color: #fff; }
.head { background: #0f766e; color: #fff; font-weight: 700; text-align: center; border-right: 1px solid #cdd; }
.data { border-right: 1px solid #cfd3d3; border-bottom: 1px solid #cfd3d3; padding-left: 1px; }
.num { text-align: right; padding-right: 1px; }
.tint { background: #f0fdfa; }
.bad { text-decoration: underline wavy #e02b2b 1px; text-decoration-skip-ink: none; text-underline-offset: -1px; }

.chart { position: absolute; left: 346px; font-size: 8px; fill: #111; overflow: hidden; }
.app .chart { font-family: Carlito, Lato, sans-serif; }
.pie { top: 128px; }
.trend { top: 293px; }
.ctitle { font-size: 15px; font-weight: 700; text-anchor: middle; }
.mid { text-anchor: middle; }
.end { text-anchor: end; }

.vscroll { width: 9px; padding: 2px 1px; box-sizing: border-box; background: #cecdcc; }
.vthumb { width: 6px; height: 48%; border-radius: 3px; background: #838583; }
.hscroll { display: flex; align-items: center; height: 10px; margin-right: 9px; padding: 0 1px 0 2px; background: #cecdcc; justify-content: space-between; }
.hthumb { width: 47%; height: 6px; border-radius: 3px; background: #838583; }
.grip { width: 1px; height: 7px; background: #444; }

.tabs { display: flex; height: 16px; font-size: 8px; }
.tabnav { margin-left: 5px; }
.addsheet { margin: 0 3px 0 8px; }
.tab { position: relative; padding: 0 8px; }
.tab:not(.current)::after { content: ""; position: absolute; right: 0; top: 4px; height: 8px; width: 1px; background: #c8c6c4; }
.tab.current { background: #fff; font-weight: 700; border-bottom: 2px solid #9a9998; }

.sidebar { position: relative; width: 39px; border-left: 1px solid #dad8d6; display: flex; flex-direction: column; align-items: center; gap: 13px; padding-top: 8px; box-sizing: border-box; }
.sidebar button { width: 24px; height: 16px; }
.sidebar .splitter { position: absolute; left: -1px; top: 269px; width: 5px; height: 50px; background: #9b9b9a; border-radius: 1px; }

.status {
  display: grid; height: 16px; border-top: 1px solid #d6d4d2; font-size: 8px;
  grid-template-columns: 20px 159fr 222fr 202fr 168fr 46px 31px 20px 20px 183fr 128px;
}
.status > span { display: flex; align-items: center; padding-left: 6px; border-right: 1px solid #e4e2e0; white-space: nowrap; }
.status > .pad { padding-left: 5px; }
.status > .ctr { justify-content: center; padding-left: 0; }
.status > .zoom { border-right: 0; gap: 4px; }
.zoom output { margin-left: 7px; }
input[type="range"] { appearance: none; width: 65px; height: 12px; background: linear-gradient(#9a9a9a, #9a9a9a) center / 100% 1px no-repeat; }
input[type="range"]::-webkit-slider-thumb { appearance: none; width: 3px; height: 8px; border: 1px solid #444; background: #f6f5f4; }
</style>
